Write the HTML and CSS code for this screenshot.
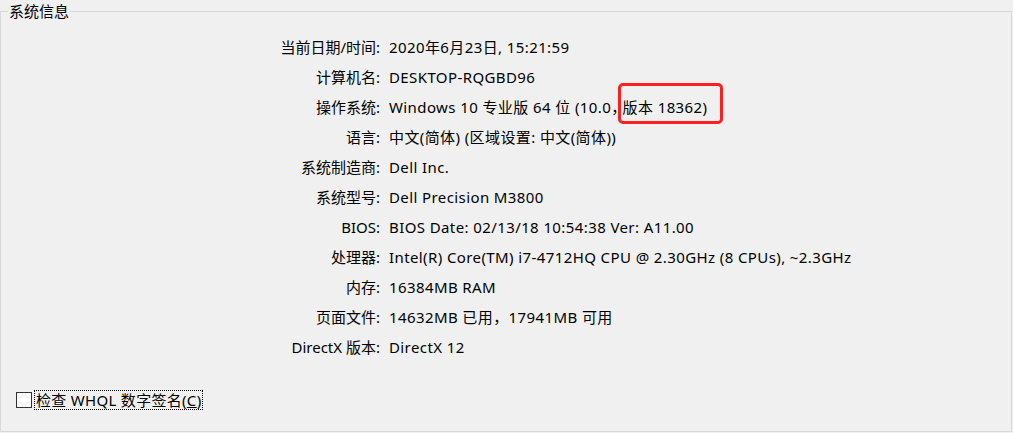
FILE: index.html
```html
<!DOCTYPE html>
<html lang="zh-CN">
  <head>
    <meta charset="UTF-8" />
    <title>系统信息</title>
    <link rel="stylesheet" href="styles.css">
  </head>
  <body>
    <fieldset class="group">
      <legend>系统信息</legend>
      <div class="info">
        <div class="label">当前日期/时间:</div><div class="value">2020年6月23日, 15:21:59</div>
        <div class="label">计算机名:</div><div class="value">DESKTOP-RQGBD96</div>
        <div class="label">操作系统:</div><div class="value">Windows 10 专业版 64 位 (10.0，<span class="mark">版本 18362)</span></div>
        <div class="label">语言:</div><div class="value">中文(简体) (区域设置: 中文(简体))</div>
        <div class="label">系统制造商:</div><div class="value">Dell Inc.</div>
        <div class="label">系统型号:</div><div class="value">Dell Precision M3800</div>
        <div class="label">BIOS:</div><div class="value">BIOS Date: 02/13/18 10:54:38 Ver: A11.00</div>
        <div class="label">处理器:</div><div class="value">Intel(R) Core(TM) i7-4712HQ CPU @ 2.30GHz (8 CPUs), ~2.3GHz</div>
        <div class="label">内存:</div><div class="value">16384MB RAM</div>
        <div class="label">页面文件:</div><div class="value">14632MB 已用，17941MB 可用</div>
        <div class="label">DirectX 版本:</div><div class="value">DirectX 12</div>
      </div>
      <label class="check">
        <span class="box"></span>
        <span class="check-text">检查 WHQL 数字签名(<u>C</u>)</span>
      </label>
    </fieldset>
  </body>
</html>
```

FILE: styles.css
```css
html, body {
  margin: 0;
  background-color: #f0f0f0;
}
body {
  font-family: "Noto Sans", "Noto Sans CJK SC", sans-serif;
  font-size: 15px;
  color: #000;
  padding: 1px 1px 1px 0;
}
.group {
  margin: 0;
  padding: 0;
  height: 431px;
  box-sizing: border-box;
  border: 1px solid #d9d9d9;
}
.group legend {
  margin-left: 7px;
  padding: 0 1px;
  line-height: 20px;
}
.info {
  display: grid;
  grid-template-columns: 379px auto;
  column-gap: 9px;
  margin-top: 11px;
  line-height: 30px;
}
.label {
  text-align: right;
}
.value {
  white-space: nowrap;
  letter-spacing: 0.4px;
}
.mark {
  position: relative;
  margin-left: -4px;
}
.mark::after {
  content: "";
  position: absolute;
  left: -5px;
  right: -16px;
  top: -14px;
  bottom: -7px;
  border: 3px solid #ff1f1f;
  border-radius: 5px;
}
.check {
  display: flex;
  align-items: center;
  margin: 29px 0 0 15px;
}
.box {
  width: 14px;
  height: 14px;
  border: 1px solid #333;
  background-color: #fff;
}
.check-text {
  margin-left: 3px;
  padding: 0 1px;
  line-height: 18px;
  letter-spacing: 0.3px;
  outline: 1px dotted #000;
}
```
